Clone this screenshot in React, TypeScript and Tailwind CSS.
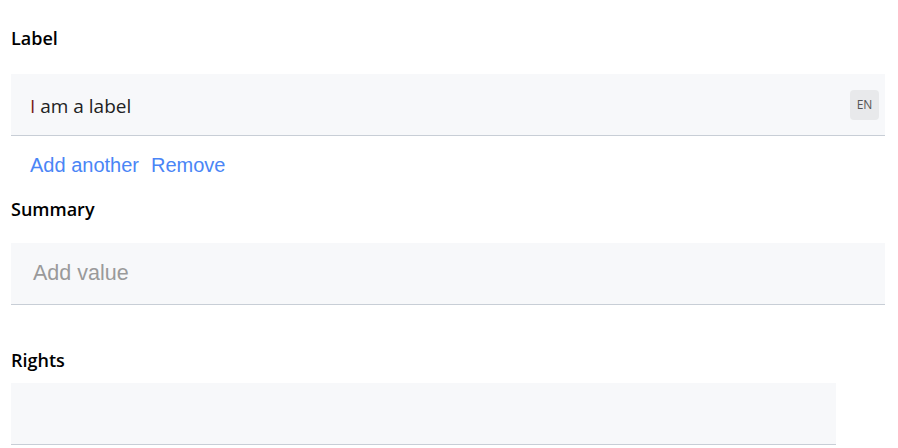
const heading = "text-[18px] font-semibold leading-[24px] text-black [font-family:'Open_Sans',sans-serif]";
const field =
  "flex h-[62px] items-center border-b border-[#c8ced6] bg-[#f7f8fa]";

export default function App() {
  return (
    <div className="min-h-[448px] bg-white px-[11px] pt-[26px]">
      <h2 className={heading}>Label</h2>
      <div className={`${field} mt-[24px] w-[874px] justify-between pl-[19px] pr-[6px]`}>
        <span className="pt-[4px] text-[19px] text-[#222] [font-family:'Open_Sans',sans-serif]">
          <span className="text-[#7a1a1a]">I</span> am a label
        </span>
        <span className="flex h-[30px] w-[29px] items-center justify-center rounded-[4px] bg-[#e8e9eb] text-[12px] text-[#555] [font-family:'Open_Sans',sans-serif]">
          EN
        </span>
      </div>
      <div className="mt-[14px] flex h-[30px] items-center gap-[12px] pl-[19px] text-[20px] text-[#4a85f6] [font-family:'Liberation_Sans',Arial,sans-serif]">
        <a href="#">Add another</a>
        <a href="#">Remove</a>
      </div>
      <h2 className={`${heading} mt-[17px]`}>Summary</h2>
      <div className={`${field} mt-[22px] w-[874px] pl-[22px]`}>
        <span className="text-[21.5px] text-[#9a9a9a] [font-family:'Liberation_Sans',Arial,sans-serif]">
          Add value
        </span>
      </div>
      <h2 className={`${heading} mt-[43px]`}>Rights</h2>
      <div className={`${field} mt-[11px] h-[59px] w-[825px]`} />
    </div>
  );
}
